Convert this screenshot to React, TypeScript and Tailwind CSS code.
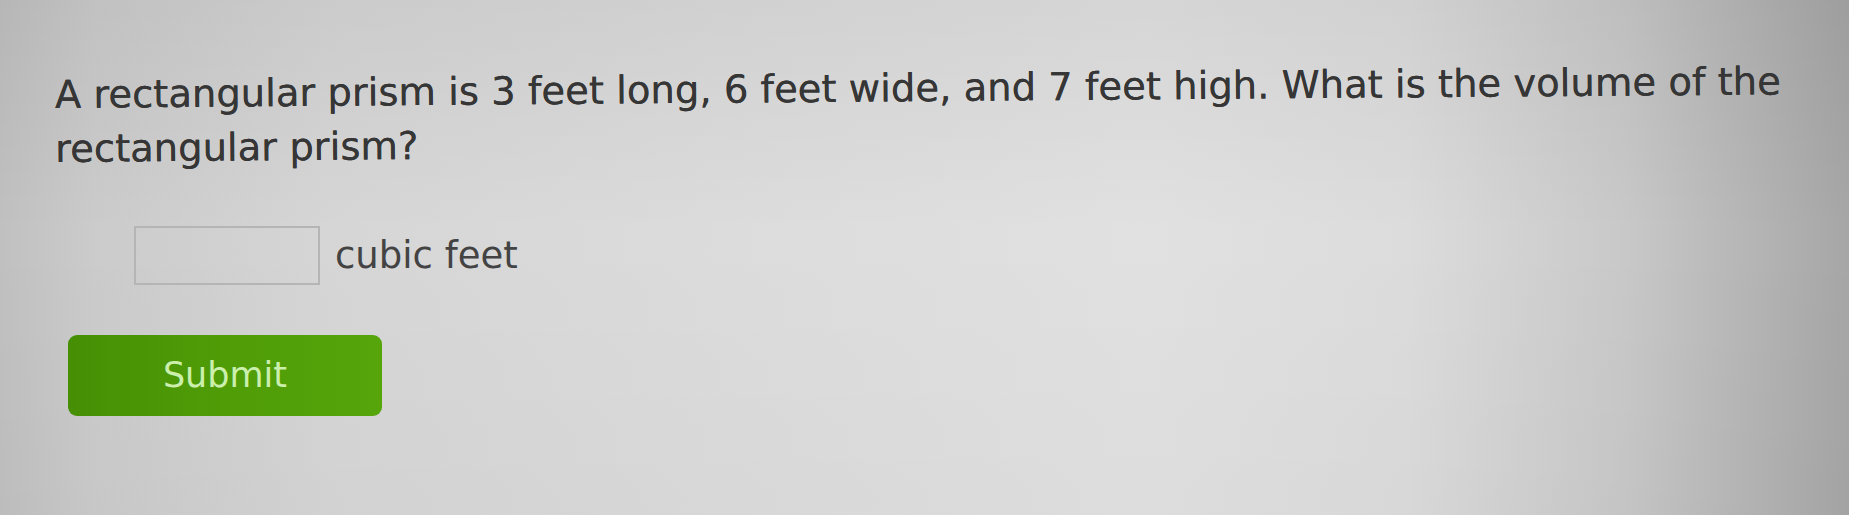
export default function App() {
  return (
    <div className="relative h-[515px] w-full overflow-hidden bg-[linear-gradient(to_right,#c0c0c0_0%,#cbcbcb_5%,#d6d6d6_18%,#dcdcdc_40%,#e1e1e1_62%,#dcdcdc_76%,#c8c8c8_88%,#a6a6a6_100%)] font-['DejaVu_Sans',Verdana,sans-serif]">
      <div className="absolute inset-0 bg-[linear-gradient(to_bottom,rgba(0,0,0,0.05)_0%,rgba(0,0,0,0)_45%,rgba(0,0,0,0.02)_100%)]" />
      <div className="relative pl-[55px] pt-[68px]">
        <p className="max-w-[1770px] origin-left -rotate-[0.45deg] text-[38.5px] leading-[54px] text-[#363636] [text-shadow:0_0_0.5px_#363636]">
          A rectangular prism is 3 feet long, 6 feet wide, and 7 feet high. What is the volume of the rectangular prism?
        </p>

        <div className="mt-[50px] ml-[79px] flex items-center gap-[15px]">
          <input
            type="text"
            aria-label="answer"
            className="h-[59px] w-[186px] border-2 border-[#b5b5b5] bg-transparent outline-none"
          />
          <span className="text-[37px] text-[#434343]">cubic feet</span>
        </div>

        <button className="mt-[50px] ml-[13px] flex h-[81px] w-[314px] items-center justify-center rounded-[9px] bg-[linear-gradient(to_right,#468f05,#4f9c07_50%,#56a50b)] text-[35px] text-[#cbefad]">
          Submit
        </button>
      </div>
    </div>
  )
}
